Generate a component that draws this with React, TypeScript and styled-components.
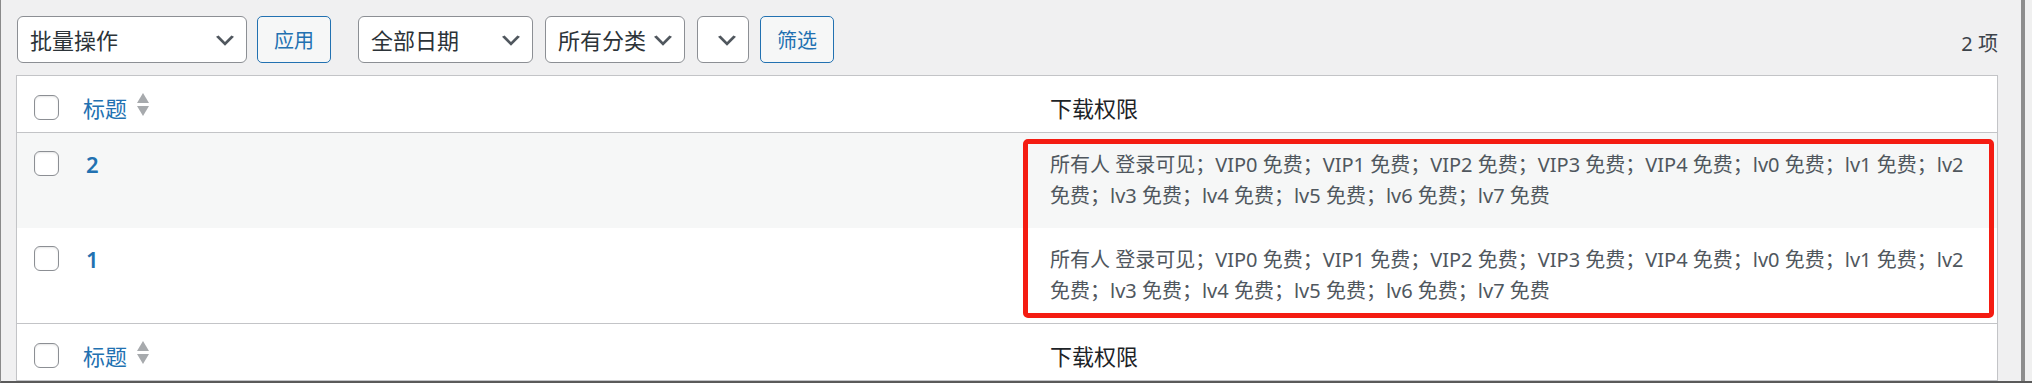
import React from 'react'
import styled, { createGlobalStyle } from 'styled-components'

const GlobalStyle = createGlobalStyle`
  html, body {
    margin: 0;
    padding: 0;
    background: #f0f0f1;
  }
  * {
    box-sizing: border-box;
  }
`

const fontStack = `"Noto Sans", "Noto Sans CJK SC", sans-serif`

const Screen = styled.div`
  display: flex;
  height: 383px;
  overflow: hidden;
  border-left: 1px solid #8a8a8a;
  border-bottom: 2px solid #5a5a5a;
  background: #f0f0f1;
  font-family: ${fontStack};
  color: #3c434a;
`

const Main = styled.div`
  flex: 1;
  padding: 16px 23px 0 15px;
  min-width: 0;
`

const ScrollEdge = styled.div`
  flex: 0 0 4px;
  background: #8d8d8d;
`

const Gutter = styled.div`
  flex: 0 0 7px;
  background: #f0f0f0;
`

const Toolbar = styled.div`
  display: flex;
  align-items: center;
  height: 47px;
  padding-left: 1px;
  margin-bottom: 12px;
`

const Group = styled.div<{ $gap: number; $after?: number }>`
  display: flex;
  align-items: center;
  gap: ${(p) => p.$gap}px;
  margin-right: ${(p) => p.$after ?? 0}px;
`

const SelectBox = styled.div<{ $width: number }>`
  display: flex;
  align-items: center;
  justify-content: space-between;
  width: ${(p) => p.$width}px;
  height: 47px;
  padding: 0 12px 0 12px;
  border: 1px solid #8c8f94;
  border-radius: 6px;
  background: #fff;
  color: #2c3338;
  font-size: 22px;
  line-height: 1;
  white-space: nowrap;
`

const Chevron = styled.svg`
  flex: 0 0 auto;
  width: 18px;
  height: 12px;
  margin-left: auto;
`

const Button = styled.div`
  display: flex;
  align-items: center;
  height: 47px;
  padding: 0 16px;
  border: 1px solid #2271b1;
  border-radius: 5px;
  background: #f6f7f7;
  color: #2271b1;
  font-size: 20px;
  white-space: nowrap;
`

const Count = styled.div`
  margin-left: auto;
  padding-top: 5px;
  font-size: 20px;
  color: #3c434a;
`

const Table = styled.div`
  position: relative;
  background: #fff;
  border: 1px solid #c3c4c7;
  box-shadow: 0 1px 1px rgba(0, 0, 0, 0.04);
`

const HeadRow = styled.div<{ $edge: 'top' | 'bottom' }>`
  display: grid;
  grid-template-columns: 56px 961px 1fr;
  align-items: center;
  height: 57px;
  padding-top: 6px;
  ${(p) =>
    p.$edge === 'top'
      ? 'border-bottom: 1px solid #c3c4c7;'
      : 'border-top: 1px solid #c3c4c7;'}
`

const BodyRow = styled.div<{ $striped?: boolean }>`
  display: grid;
  grid-template-columns: 56px 961px 1fr;
  align-items: start;
  padding: 16px 0 17px;
  background: ${(p) => (p.$striped ? '#f6f7f7' : '#fff')};
  line-height: 31px;
`

const CheckCell = styled.div<{ $offset?: number }>`
  padding-left: 17px;
  margin-top: ${(p) => p.$offset ?? 0}px;
  display: flex;
`

const Checkbox = styled.span`
  display: block;
  width: 25px;
  height: 25px;
  border: 1px solid #8c8f94;
  border-radius: 6px;
  background: #fff;
  box-shadow: inset 0 1px 2px rgba(0, 0, 0, 0.1);
`

const TitleHead = styled.div`
  display: flex;
  align-items: center;
  gap: 10px;
  padding-left: 10px;
  color: #2271b1;
  font-size: 22px;
`

const SortIcon = styled.svg`
  width: 12px;
  height: 24px;
  margin-top: -4px;
`

const HeadLabel = styled.div`
  padding-left: 16px;
  color: #1d2327;
  font-size: 22px;
`

const RowTitle = styled.div`
  padding-left: 13px;
  color: #2271b1;
  font-size: 22px;
  font-weight: 600;
`

const Permissions = styled.div`
  padding-left: 16px;
  color: #50575e;
  font-size: 20px;
  white-space: nowrap;
`

const Highlight = styled.div`
  position: absolute;
  left: 1006px;
  top: 63px;
  width: 971px;
  height: 179px;
  border: 5px solid #f41c12;
  border-radius: 5px;
  pointer-events: none;
`

const ChevronIcon = () => (
  <Chevron viewBox="3 5 14 9">
    <path d="M5 6l5 5 5-5 2 1-7 7-7-7 2-1z" fill="#50575e" />
  </Chevron>
)

const Sort = () => (
  <SortIcon viewBox="0 0 12 24">
    <polygon points="6,0 12,10 0,10" fill="#a7aaad" />
    <polygon points="0,13 12,13 6,23" fill="#a7aaad" />
  </SortIcon>
)

const Select = ({ label, width }: { label?: string; width: number }) => (
  <SelectBox $width={width}>
    {label && <span>{label}</span>}
    <ChevronIcon />
  </SelectBox>
)

const line1 =
  '所有人 登录可见；VIP0 免费；VIP1 免费；VIP2 免费；VIP3 免费；VIP4 免费；lv0 免费；lv1 免费；lv2'
const line2 = '免费；lv3 免费；lv4 免费；lv5 免费；lv6 免费；lv7 免费'

const posts = [
  { id: 2, striped: true },
  { id: 1, striped: false },
]

const Header = ({ edge }: { edge: 'top' | 'bottom' }) => (
  <HeadRow $edge={edge}>
    <CheckCell>
      <Checkbox />
    </CheckCell>
    <TitleHead>
      <span>标题</span>
      <Sort />
    </TitleHead>
    <HeadLabel>下载权限</HeadLabel>
  </HeadRow>
)

export default function App() {
  return (
    <>
      <GlobalStyle />
      <Screen>
        <Main>
          <Toolbar>
            <Group $gap={10} $after={27}>
              <Select label="批量操作" width={230} />
              <Button>应用</Button>
            </Group>
            <Group $gap={12}>
              <Select label="全部日期" width={175} />
              <Select label="所有分类" width={140} />
              <Group $gap={11}>
                <Select width={52} />
                <Button>筛选</Button>
              </Group>
            </Group>
            <Count>2 项</Count>
          </Toolbar>
          <Table>
            <Header edge="top" />
            {posts.map((post) => (
              <BodyRow key={post.id} $striped={post.striped}>
                <CheckCell $offset={2}>
                  <Checkbox />
                </CheckCell>
                <RowTitle>{post.id}</RowTitle>
                <Permissions>
                  {line1}
                  <br />
                  {line2}
                </Permissions>
              </BodyRow>
            ))}
            <Header edge="bottom" />
            <Highlight />
          </Table>
        </Main>
        <ScrollEdge />
        <Gutter />
      </Screen>
    </>
  )
}
